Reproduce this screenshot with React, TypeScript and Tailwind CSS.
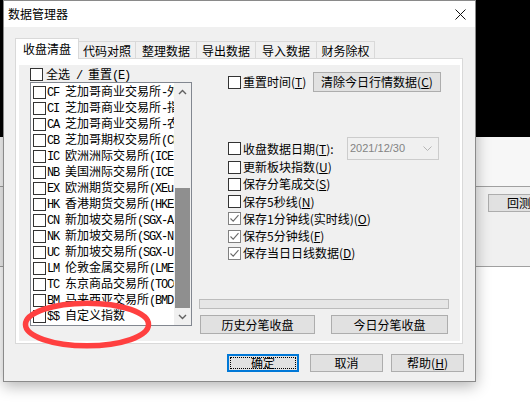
import React from "react";

const items: [string, string][] = [
  ["CF", "芝加哥商业交易所-外汇"],
  ["CI", "芝加哥商业交易所-指数"],
  ["CA", "芝加哥商业交易所-农产品"],
  ["CB", "芝加哥期权交易所(CBOE)"],
  ["IC", "欧洲洲际交易所(ICE)"],
  ["NB", "美国洲际交易所(ICE)"],
  ["EX", "欧洲期货交易所(XEurex)"],
  ["HK", "香港期货交易所(HKEX)"],
  ["CN", "新加坡交易所(SGX-A)"],
  ["NK", "新加坡交易所(SGX-N)"],
  ["UC", "新加坡交易所(SGX-U)"],
  ["LM", "伦敦金属交易所(LME)"],
  ["TC", "东京商品交易所(TOCOM)"],
  ["BM", "马来西亚交易所(BMD)"],
  ["$$", "自定义指数"],
];

const tabs = [
  { label: "代码对照", w: "w-[57px]" },
  { label: "整理数据", w: "w-[61px]" },
  { label: "导出数据", w: "w-[59px]" },
  { label: "导入数据", w: "w-[61px]" },
  { label: "财务除权", w: "w-[58px]" },
];

function Box({ checked }: { checked?: boolean }) {
  return (
    <span
      className={`flex h-[13px] w-[13px] shrink-0 items-center justify-center border bg-white ${
        checked ? "border-[#808080]" : "border-[#333333]"
      }`}
    >
      {checked && (
        <svg width="11" height="11" viewBox="0 0 11 11">
          <path d="M1.5 5.5 L4.2 8.2 L9.5 2.2" fill="none" stroke="#6a6a6a" strokeWidth="1.1" />
        </svg>
      )}
    </span>
  );
}

// latin runs in a narrow mono face, CJK runs in Noto
function Mixed({ text }: { text: string }) {
  const parts = text.match(/[\x20-\x7e]+|[^\x20-\x7e]+/g) ?? [];
  return (
    <>
      {parts.map((p, i) =>
        /[\x20-\x7e]/.test(p[0]) ? (
          <span key={i} className="font-['Liberation_Mono'] text-[12px] tracking-[-1.2px]">
            {p}
          </span>
        ) : (
          <span key={i}>{p}</span>
        )
      )}
    </>
  );
}

function Check({ label, k, checked }: { label: string; k: string; checked?: boolean }) {
  return (
    <div className="flex h-[17.25px] items-center pl-[29px]">
      <Box checked={checked} />
      <span className="ml-[2px] leading-[14px]">
        {label}(<u>{k}</u>)
      </span>
    </div>
  );
}

function Btn({ children, className }: { children: React.ReactNode; className: string }) {
  return (
    <div className={`flex items-center justify-center border border-[#adadad] bg-[#e1e1e1] leading-[14px] ${className}`}>
      {children}
    </div>
  );
}

export default function App() {
  return (
    <div className="relative h-[420px] w-[530px] overflow-hidden bg-white font-['Noto_Sans_CJK_SC',sans-serif] text-[12px] text-black">
      {/* desktop behind */}
      <div className="h-[137px] bg-black" />
      <div className="h-[49px] bg-[#f7f7f7]" />
      <div className="h-[81px] border-y border-[#a0a0a0] bg-[#f0f0f0]" />
      <div className="absolute left-[488px] top-[194px] flex h-[18px] w-[60px] items-center border border-[#adadad] bg-[#e1e1e1] pl-[18px] leading-[14px]">
        回测
      </div>

      {/* dialog */}
      <div className="absolute left-[3px] top-0 flex h-[382px] w-[473px] flex-col border border-[#8a8a8a] bg-[#f0f0f0] shadow-[0_4px_14px_rgba(0,0,0,0.3)]">
        <div className="flex h-[26px] items-center justify-between bg-white pl-[4px] pr-[9px]">
          <span className="leading-[14px]">数据管理器</span>
          <svg width="11" height="11" viewBox="0 0 11 11">
            <path d="M0.5 0.5 L10.5 10.5 M10.5 0.5 L0.5 10.5" stroke="#111" strokeWidth="1" />
          </svg>
        </div>

        <div className="flex flex-1 flex-col pl-[11px] pt-[11px]">
          {/* tabs */}
          <div className="relative z-10 flex h-[20px] items-end">
            <div className="-mb-px flex h-[21px] w-[64px] items-center justify-center border-x border-t border-[#d9d9d9] bg-white leading-[14px]">
              收盘清盘
            </div>
            {tabs.map((t) => (
              <div
                key={t.label}
                className={`flex h-[17px] items-center justify-center border-r border-t border-[#d9d9d9] pt-[1px] leading-[14px] ${t.w}`}
              >
                {t.label}
              </div>
            ))}
          </div>

          {/* panel */}
          <div className="h-[286px] w-[448px] border border-[#d9d9d9] bg-white pb-[2px] pl-[3px] pr-[2px] pt-[6px]">
            <div className="flex h-full bg-[#f0f0f0]">
              {/* left column */}
              <div className="w-[173px] pl-[11px] pt-[2px]">
                <div className="flex h-[15px] items-center whitespace-pre">
                  <Box />
                  <span className="ml-[3px] leading-[14px]">
                    <Mixed text="全选 / 重置(E)" />
                  </span>
                </div>
                <div className="flex h-[244px] w-[162px] border border-[#828790] bg-white">
                  <div className="flex-1 overflow-hidden pt-[1px]">
                    {items.map(([code, name]) => (
                      <div key={code} className="flex h-[16px] items-center whitespace-pre pl-[2px]">
                        <Box />
                        <span className="ml-[1px] shrink-0 leading-[16px]">
                          <Mixed text={`${code} ${name}`} />
                        </span>
                      </div>
                    ))}
                  </div>
                  <div className="flex w-[17px] flex-col bg-[#f0f0f0]">
                    <div className="flex h-[17px] items-center justify-center">
                      <svg width="9" height="6" viewBox="0 0 9 6">
                        <path d="M1 5 L4.5 1.5 L8 5" fill="none" stroke="#606060" strokeWidth="1.4" />
                      </svg>
                    </div>
                    <div className="flex flex-1 flex-col justify-end px-[1px]">
                      <div className="h-[120px] bg-[#8f8f8f]" />
                    </div>
                    <div className="flex h-[17px] items-center justify-center">
                      <svg width="9" height="6" viewBox="0 0 9 6">
                        <path d="M1 1 L4.5 4.5 L8 1" fill="none" stroke="#606060" strokeWidth="1.4" />
                      </svg>
                    </div>
                  </div>
                </div>
              </div>

              {/* right column */}
              <div className="ml-[7px] flex w-[250px] flex-col pt-[7px]">
                <div className="flex h-[20px] items-center pl-[29px]">
                  <Box />
                  <span className="ml-[2px] leading-[14px]">
                    重置时间(<u>T</u>)
                  </span>
                  <Btn className="ml-auto mr-[8px] h-[20px] w-[128px]">
                    清除今日行情数据(<u>C</u>)
                  </Btn>
                </div>

                <div className="mt-[45px] flex h-[23px] items-center pl-[29px]">
                  <Box />
                  <span className="ml-[2px] leading-[14px]">
                    收盘数据日期(<u>T</u>):
                  </span>
                  <div className="ml-auto mr-[10px] flex h-[23px] w-[92px] items-center justify-between border border-[#cccccc] bg-[#f0f0f0] pl-[2px] pr-[6px] font-['Liberation_Sans',sans-serif] text-[11px] text-[#838383]">
                    <span>2021/12/30</span>
                    <svg width="9" height="5" viewBox="0 0 9 5">
                      <path d="M0.5 0.5 L4.5 4.5 L8.5 0.5" fill="none" stroke="#b5b5b5" strokeWidth="1" />
                    </svg>
                  </div>
                </div>

                <div className="-mt-[1.5px]">
                  <Check label="更新板块指数" k="U" />
                  <Check label="保存分笔成交" k="S" />
                  <Check label="保存5秒线" k="N" />
                  <Check label="保存1分钟线(实时线)" k="O" checked />
                  <Check label="保存5分钟线" k="F" checked />
                  <Check label="保存当日日线数据" k="D" checked />
                </div>

                <div className="mt-[37px] h-[10px] w-[250px] border border-[#bcbcbc] bg-[#e6e6e6]" />

                <div className="mt-[6px] flex">
                  <Btn className="ml-[1px] h-[19px] w-[115px]">历史分笔收盘</Btn>
                  <Btn className="ml-[16px] h-[19px] w-[117px]">今日分笔收盘</Btn>
                </div>
              </div>
            </div>
          </div>

          {/* dialog buttons */}
          <div className="mt-[10px] flex w-[449px] justify-end">
            <div className="flex h-[18px] w-[72px] items-center justify-center border-2 border-[#0078d7] bg-[#e1e1e1] p-[1px]">
              <span className="flex h-full w-full items-center justify-center border border-dotted border-black leading-[14px]">
                确定
              </span>
            </div>
            <Btn className="ml-[11px] h-[18px] w-[73px]">取消</Btn>
            <Btn className="ml-[8px] h-[18px] w-[73px]">
              帮助(<u>H</u>)
            </Btn>
          </div>
        </div>
      </div>

      {/* red annotation ellipse */}
      <svg className="pointer-events-none absolute left-0 top-0" width="530" height="420">
        <ellipse cx="87" cy="324.5" rx="61.5" ry="21.3" fill="none" stroke="#ff4040" strokeWidth="5.5" />
      </svg>
    </div>
  );
}
